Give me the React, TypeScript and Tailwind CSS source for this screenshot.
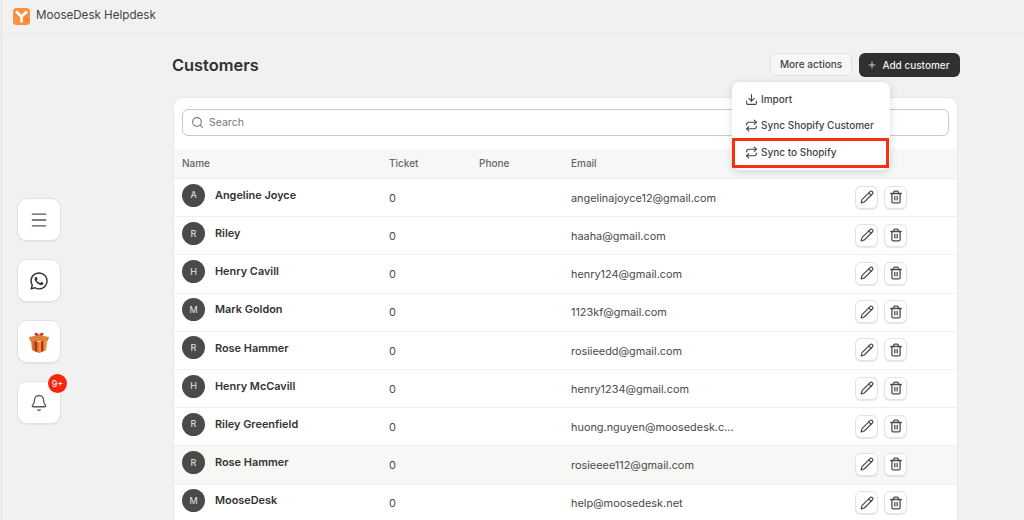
import { Bell, Download, Menu, Pencil, Plus, Repeat, Search, Trash2 } from 'lucide-react';
import { FaWhatsapp } from 'react-icons/fa';

const customers = [
  { name: 'Angeline Joyce', email: 'angelinajoyce12@gmail.com' },
  { name: 'Riley', email: 'haaha@gmail.com' },
  { name: 'Henry Cavill', email: 'henry124@gmail.com' },
  { name: 'Mark Goldon', email: '1123kf@gmail.com' },
  { name: 'Rose Hammer', email: 'rosiieedd@gmail.com' },
  { name: 'Henry McCavill', email: 'henry1234@gmail.com' },
  { name: 'Riley Greenfield', email: 'huong.nguyen@moosedesk.c...' },
  { name: 'Rose Hammer', email: 'rosieeee112@gmail.com', hovered: true },
  { name: 'MooseDesk', email: 'help@moosedesk.net' },
];

function Logo() {
  return (
    <svg width="17" height="17" viewBox="0 0 17 17">
      <rect width="17" height="17" rx="3.5" fill="#f79340" />
      <path d="M3 3.5 L8.5 8.5 L14 3.5 M8.5 8.5 V14.5" fill="none" stroke="#fff" strokeWidth="2.6" />
      <circle cx="13" cy="10" r="0.7" fill="#ef4a23" />
      <circle cx="14.5" cy="12" r="0.7" fill="#ef4a23" />
      <circle cx="12.5" cy="13" r="0.7" fill="#ef4a23" />
    </svg>
  );
}

function Gift() {
  return (
    <svg width="22" height="22" viewBox="0 0 22 22">
      <path d="M7 4 C5 1 9 1 11 4 C13 1 17 1 15 4 L13 6 H9 Z" fill="#c8321f" />
      <path d="M1 6 L11 4 L21 6 L20 10 H2 Z" fill="#e0813a" />
      <path d="M3 9 L11 11 L19 9 L18 19 L11 22 L4 19 Z" fill="#d9752d" />
      <path d="M11 11 L19 9 L18 19 L11 22 Z" fill="#e8963f" />
      <path d="M6.5 10 L9 10.6 V21 L6.5 20 Z" fill="#b9301f" />
      <path d="M13 10.6 L15.5 10 V20 L13 21 Z" fill="#b9301f" />
    </svg>
  );
}

function SideButton({ children, badge }: { children: React.ReactNode; badge?: string }) {
  return (
    <div className="relative w-[44px] h-[43px] rounded-[10px] bg-white border border-[#e3e3e3] shadow-[0_1px_1px_rgba(0,0,0,0.06)] flex items-center justify-center">
      {children}
      {badge && (
        <span className="absolute top-[-8px] right-[-7px] w-[19px] h-[19px] rounded-full bg-[#f5260f] text-white text-[9px] flex items-center justify-center">
          {badge}
        </span>
      )}
    </div>
  );
}

function IconButton({ children }: { children: React.ReactNode }) {
  return (
    <div className="w-[23px] h-[23px] rounded-[6px] bg-white border border-[#e3e3e3] shadow-[0_1px_1px_rgba(0,0,0,0.1)] flex items-center justify-center text-[#4a4a4a]">
      {children}
    </div>
  );
}

function Row({ name, email, hovered }: { name: string; email: string; hovered?: boolean }) {
  return (
    <div className={`h-[38.2px] border-b border-[#f0f0f0] flex items-center text-[10.9px] text-[#4a4a4a] ${hovered ? 'bg-[#f7f7f5]' : 'bg-white'}`}>
      <div className="w-[215px] pl-[8px] flex items-center gap-[10px] pb-[5px]">
        <span className="w-[23px] h-[23px] rounded-full bg-[#4a4a4a] text-[#e8e8e8] text-[9px] flex items-center justify-center">
          {name[0]}
        </span>
        <span className="font-semibold text-[#333]">{name}</span>
      </div>
      <div className="w-[182px] pt-[1px]">0</div>
      <div className="w-[284px] pt-[1px]">{email}</div>
      <div className="flex gap-[6px] pb-[1px]">
        <IconButton>
          <Pencil size={14} />
        </IconButton>
        <IconButton>
          <Trash2 size={14} strokeWidth={2.2} />
        </IconButton>
      </div>
    </div>
  );
}

export default function App() {
  return (
    <div className="w-[1024px] h-[520px] overflow-hidden bg-[#f1f1f1] shadow-[inset_3px_0_0_#ebebeb] font-['Inter',sans-serif] text-[#333]">
      <header className="h-[33px] pl-[13px] flex items-center gap-[6px] border-b border-[#ececec]">
        <Logo />
        <span className="text-[11.6px] text-[#444]">MooseDesk Helpdesk</span>
      </header>

      <div className="flex">
        <aside className="w-[173px] shrink-0 pl-[17px] pt-[165px] flex flex-col gap-[18px]">
          <SideButton>
            <Menu size={20} strokeWidth={1.6} className="text-[#555]" />
          </SideButton>
          <SideButton>
            <FaWhatsapp size={20} className="text-[#333]" />
          </SideButton>
          <SideButton>
            <Gift />
          </SideButton>
          <SideButton badge="9+">
            <Bell size={18} strokeWidth={1.7} className="text-[#555]" />
          </SideButton>
        </aside>

        <main className="w-[787px] shrink-0">
          <div className="relative h-[64px] flex items-center justify-between pt-[2px] pb-[2px]">
            <h1 className="text-[16.4px] font-semibold text-[#303030] ml-[-1px]">Customers</h1>
            <div className="flex items-start gap-[7px]">
              <button className="w-[82px] h-[23px] rounded-[6px] bg-[#f7f7f7] border border-[#e2e2e2] text-[10px] font-medium text-[#444]">
                More actions
              </button>
              <button className="w-[101px] h-[24px] rounded-[6px] bg-[#303030] text-[10px] font-medium text-[#eee] flex items-center justify-center gap-[5px] pr-[2px]">
                <Plus size={10} />
                Add customer
              </button>
            </div>
            <div className="absolute z-10 top-[49px] left-[559px] w-[158px] h-[88px] rounded-[8px] bg-white shadow-[0_2px_8px_rgba(0,0,0,0.15)] text-[10px] font-medium text-[#444] flex flex-col">
              <div className="h-[28px] mt-[3px] pl-[13px] flex items-center gap-[3px]">
                <Download size={13} />
                Import
              </div>
              <div className="h-[24px] pl-[13px] flex items-center gap-[3px]">
                <Repeat size={13} />
                Sync Shopify Customer
              </div>
              <div className="h-[30px] mt-[1px] w-[157px] pl-[10px] pb-[2px] flex items-center gap-[3px] border-[3px] border-[#f5310f]">
                <Repeat size={13} />
                Sync to Shopify
              </div>
            </div>
          </div>

          <section className="w-[785px] rounded-t-[10px] bg-white border border-b-0 border-[#e8e8e8] overflow-hidden">
            <div className="h-[51px] px-[8px] pt-[11px]">
              <div className="h-[27px] rounded-[6px] border border-[#c9c9c9] pl-[8px] flex items-center gap-[5px] text-[10.5px] text-[#777]">
                <Search size={13} />
                Search
              </div>
            </div>
            <div className="h-[30px] bg-[#f7f7f7] border-b border-[#ededed] flex items-center text-[10px] font-medium text-[#666]">
              <div className="w-[215px] pl-[8px]">Name</div>
              <div className="w-[90px]">Ticket</div>
              <div className="w-[92px]">Phone</div>
              <div>Email</div>
            </div>
            {customers.map((c, i) => (
              <Row key={i} name={c.name} email={c.email} hovered={c.hovered} />
            ))}
          </section>
        </main>
      </div>
    </div>
  );
}
